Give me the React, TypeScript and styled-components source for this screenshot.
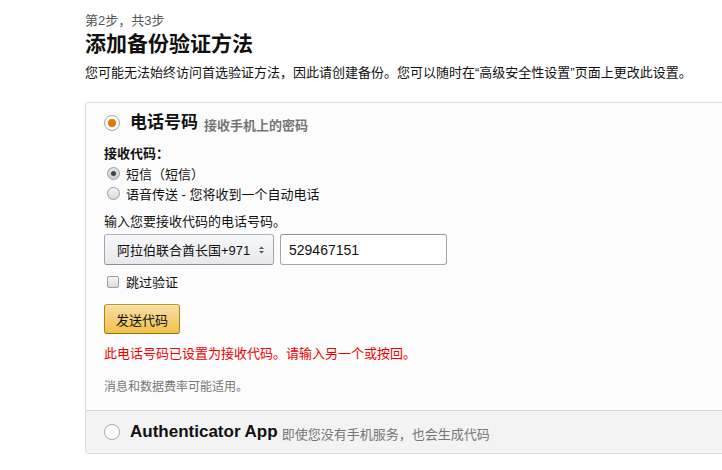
import React from "react";
import styled, { createGlobalStyle } from "styled-components";

const Global = createGlobalStyle`
  html, body { margin: 0; padding: 0; background: #fff; overflow: hidden; }
  body {
    font-family: "Liberation Sans", "Noto Sans CJK SC", sans-serif;
    color: #111;
    font-size: 13px;
  }
`;

const Page = styled.div`
  padding: 11px 0 0 85px;
`;

const Step = styled.div`
  font-size: 13px;
  line-height: 19px;
  color: #555;
`;

const Title = styled.h1`
  margin: 1px 0 0;
  font-size: 21px;
  line-height: 26px;
  font-weight: 700;
  color: #111;
`;

const Desc = styled.p`
  margin: 6px 0 0;
  font-size: 13px;
  line-height: 19px;
  color: #111;
`;

const Card = styled.div`
  margin-top: 20px;
  border: 1px solid #ddd;
  border-right: none;
  border-radius: 4px 0 0 4px;
  overflow: hidden;
`;

const Section = styled.div<{ $muted?: boolean }>`
  background: ${(p) => (p.$muted ? "#f3f3f3" : "#fcfcfc")};
  padding: ${(p) => (p.$muted ? "9px 18px 9px" : "8px 18px 14px")};
  & + & { border-top: 1px solid #ddd; }
`;

const Header = styled.div`
  display: flex;
  align-items: center;
  height: 24px;
`;

const BigRadio = styled.span<{ $checked?: boolean }>`
  width: 16px;
  height: 16px;
  box-sizing: border-box;
  border-radius: 50%;
  border: 1px solid #a6a6a6;
  background: #fff;
  display: inline-flex;
  align-items: center;
  justify-content: center;
  margin-right: 10px;
  flex: none;
  &::after {
    content: "";
    display: ${(p) => (p.$checked ? "block" : "none")};
    width: 8px;
    height: 8px;
    border-radius: 50%;
    background: #e77600;
  }
`;

const OptionName = styled.span`
  font-size: 17px;
  font-weight: 700;
  color: #111;
  line-height: 24px;
`;

const OptionHint = styled.span<{ $bold?: boolean }>`
  font-size: 13px;
  font-weight: ${(p) => (p.$bold ? 700 : 400)};
  color: #767676;
  margin-left: ${(p) => (p.$bold ? 6 : 4)}px;
  margin-top: 2px;
`;

const Body = styled.div`
  display: flex;
  flex-direction: column;
  align-items: flex-start;
`;

const FieldLabel = styled.div<{ $bold?: boolean; $top: number }>`
  font-size: 13px;
  line-height: 18px;
  font-weight: ${(p) => (p.$bold ? 700 : 400)};
  margin-top: ${(p) => p.$top}px;
  color: #111;
`;

const ChoiceRow = styled.label`
  display: flex;
  align-items: center;
  height: 20px;
  font-size: 13px;
  color: #111;
  padding-left: 3px;
`;

const SmallRadio = styled.span<{ $checked?: boolean }>`
  width: 13px;
  height: 13px;
  box-sizing: border-box;
  border-radius: 50%;
  border: 1px solid #9c9c9c;
  background: ${(p) =>
    p.$checked ? "linear-gradient(#e4e4e4, #cfcfcf)" : "linear-gradient(#f6f6f6, #d8d8d8)"};
  display: inline-flex;
  align-items: center;
  justify-content: center;
  margin-right: 6px;
  &::after {
    content: "";
    display: ${(p) => (p.$checked ? "block" : "none")};
    width: 5px;
    height: 5px;
    border-radius: 50%;
    background: #444;
  }
`;

const CheckBox = styled.span`
  width: 12px;
  height: 12px;
  box-sizing: border-box;
  border-radius: 2px;
  border: 1px solid #9c9c9c;
  background: linear-gradient(#f6f6f6, #dcdcdc);
  margin-right: 7px;
`;

const PhoneRow = styled.div`
  display: flex;
  gap: 6px;
  margin-top: 3px;
`;

const CountrySelect = styled.div`
  width: 170px;
  height: 31px;
  box-sizing: border-box;
  border: 1px solid #adb1b8;
  border-color: #adb1b8 #a2a6ac #8d9096;
  border-radius: 3px;
  background: linear-gradient(#f7f8fa, #e7e9ec);
  display: flex;
  align-items: center;
  justify-content: space-between;
  padding: 0 8px 0 12px;
  font-size: 13px;
  color: #111;
`;

const PhoneInput = styled.div`
  width: 167px;
  height: 31px;
  box-sizing: border-box;
  border: 1px solid #a6a6a6;
  border-top-color: #949494;
  border-radius: 3px;
  background: #fff;
  display: flex;
  align-items: center;
  padding-left: 8px;
  font-size: 14px;
  color: #111;
`;

const CheckRow = styled(ChoiceRow)`
  margin-top: 7px;
  height: 19px;
`;

const SendButton = styled.button`
  margin-top: 13px;
  height: 30px;
  padding: 0 11px;
  border: 1px solid #a88734;
  border-color: #c89411 #b0820f #99710d;
  border-radius: 3px;
  background: linear-gradient(#f7dfa5, #f0c14b);
  font-family: inherit;
  font-size: 13px;
  color: #111;
  box-shadow: inset 0 1px 0 rgba(255, 255, 255, 0.4);
`;

const ErrorText = styled.div`
  margin-top: 10px;
  font-size: 13px;
  line-height: 19px;
  color: #e00;
`;

const Note = styled.div`
  margin-top: 15px;
  font-size: 12px;
  line-height: 18px;
  color: #767676;
`;

const Arrows = () => (
  <svg width="7" height="10" viewBox="0 0 7 10">
    <path d="M1 4 L3.5 1.5 L6 4 Z" fill="#555" />
    <path d="M1 6 L3.5 8.5 L6 6 Z" fill="#555" />
  </svg>
);

export default function App() {
  return (
    <>
      <Global />
      <Page>
        <Step>第2步，共3步</Step>
        <Title>添加备份验证方法</Title>
        <Desc>
          您可能无法始终访问首选验证方法，因此请创建备份。您可以随时在“高级安全性设置”页面上更改此设置。
        </Desc>
        <Card>
          <Section>
            <Header>
              <BigRadio $checked />
              <OptionName>电话号码</OptionName>
              <OptionHint $bold>接收手机上的密码</OptionHint>
            </Header>
            <Body>
              <FieldLabel $bold $top={10}>接收代码：</FieldLabel>
              <ChoiceRow>
                <SmallRadio $checked />
                短信（短信）
              </ChoiceRow>
              <ChoiceRow>
                <SmallRadio />
                语音传送 - 您将收到一个自动电话
              </ChoiceRow>
              <FieldLabel $top={10}>输入您要接收代码的电话号码。</FieldLabel>
              <PhoneRow>
                <CountrySelect>
                  <span>阿拉伯联合酋长国+971</span>
                  <Arrows />
                </CountrySelect>
                <PhoneInput>529467151</PhoneInput>
              </PhoneRow>
              <CheckRow>
                <CheckBox />
                跳过验证
              </CheckRow>
              <SendButton>发送代码</SendButton>
              <ErrorText>此电话号码已设置为接收代码。请输入另一个或按回。</ErrorText>
              <Note>消息和数据费率可能适用。</Note>
            </Body>
          </Section>
          <Section $muted>
            <Header>
              <BigRadio />
              <OptionName>Authenticator App</OptionName>
              <OptionHint>即使您没有手机服务，也会生成代码</OptionHint>
            </Header>
          </Section>
        </Card>
      </Page>
    </>
  );
}
